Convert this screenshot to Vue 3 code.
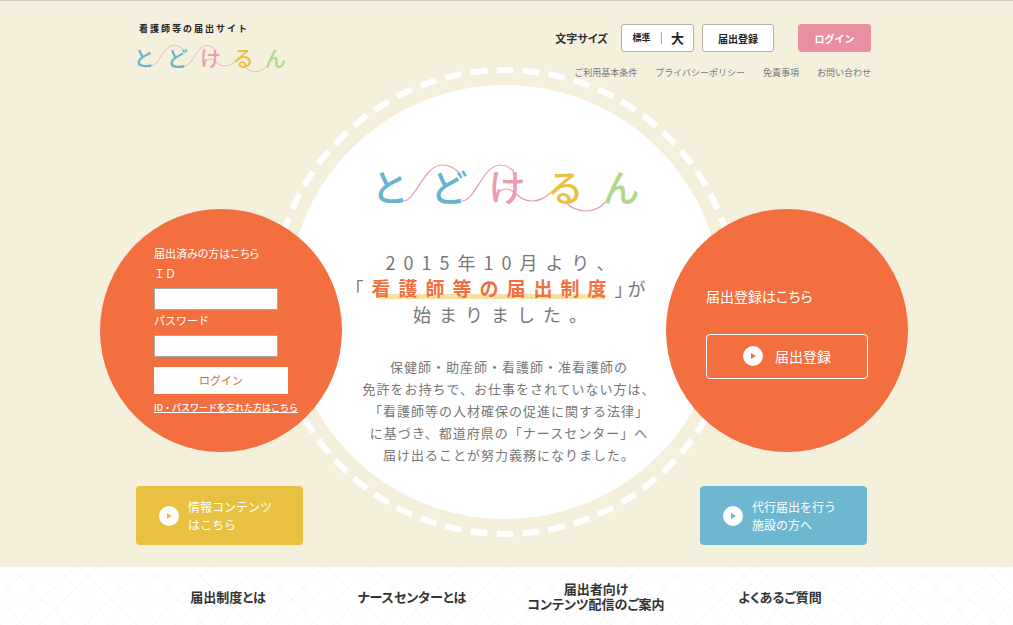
<script setup>
import { h, ref } from 'vue'

const userId = ref('')
const password = ref('')

const logoLetters = [
  { char: 'と', x: 14, fill: '#67b5cd' },
  { char: 'ど', x: 73, fill: '#67b5cd' },
  { char: 'け', x: 131, fill: '#ea9db2' },
  { char: 'る', x: 189, fill: '#e9c144' },
  { char: 'ん', x: 245, fill: '#aed88c' },
]

const logoThreads = [
  'M27 38C40 38 48 2 66 2C75 2 80 6 84 11',
  'M86 38C99 38 107 2 124 2C131 2 135 5 138 9',
  'M119 34C122 28 127 26 131 26C139 26 142 38 156 38C164 38 170 34 174 30',
  'M189 39C195 45 202 48 210 48C218 48 226 44 229 39',
]

const SiteLogo = () =>
  h('svg', { viewBox: '0 0 264 50', overflow: 'visible', role: 'img', 'aria-label': 'とどけるん' }, [
    ...logoThreads.map((d) => h('path', { d, fill: 'none', stroke: '#e99db0', 'stroke-width': 1.2 })),
    ...logoLetters.map((l) =>
      h(
        'text',
        { x: l.x, y: 39, fill: l.fill, 'font-size': 37, 'font-weight': 500, 'text-anchor': 'middle' },
        l.char,
      ),
    ),
  ])

const PlayIcon = () =>
  h('svg', { viewBox: '0 0 20 20', 'aria-hidden': 'true' }, [
    h('path', {
      fill: '#fff',
      'fill-rule': 'evenodd',
      d: 'M10 0a10 10 0 1 0 0 20a10 10 0 0 0 0-20zM8 7l5 3l-5 3z',
    }),
  ])

const policyLinks = ['ご利用基本条件', 'プライバシーポリシー', '免責事項', 'お問い合わせ']

const navItems = [
  ['届出制度とは'],
  ['ナースセンターとは'],
  ['届出者向け', 'コンテンツ配信のご案内'],
  ['よくあるご質問'],
]

const leadLines = [
  '保健師・助産師・看護師・准看護師の',
  '免許をお持ちで、お仕事をされていない方は、',
  '「看護師等の人材確保の促進に関する法律」',
  'に基づき、都道府県の「ナースセンター」へ',
  '届け出ることが努力義務になりました。',
]
</script>

<template>
  <div class="page">
    <div class="hero">
      <div class="container">
        <svg class="ring" viewBox="0 0 470 470" aria-hidden="true">
          <circle cx="235" cy="235" r="217" fill="#fff" />
          <circle
            cx="235"
            cy="235"
            r="232"
            fill="none"
            stroke="#fff"
            stroke-width="6"
            pathLength="560"
            stroke-dasharray="6.4 3.6"
            stroke-dashoffset="3.2"
            transform="rotate(-90 235 235)"
          />
        </svg>

        <header class="header">
          <a class="brand" href="#">
            <span class="brand-caption">看護師等の届出サイト</span>
            <SiteLogo class="brand-logo" />
          </a>
          <div class="tools">
            <div class="tool-row">
              <span class="size-label">文字サイズ</span>
              <div class="size-switch">
                <button type="button" class="size-normal">標準</button>
                <button type="button" class="size-large">大</button>
              </div>
              <button type="button" class="tool register">届出登録</button>
              <button type="button" class="tool login">ログイン</button>
            </div>
            <nav class="policies">
              <a v-for="p in policyLinks" :key="p" href="#">{{ p }}</a>
            </nav>
          </div>
        </header>

        <main class="stage">
          <form class="disc member" @submit.prevent>
            <p class="member-title">届出済みの方はこちら</p>
            <label for="user-id">ＩＤ</label>
            <input id="user-id" v-model="userId" type="text" />
            <label for="user-pass">パスワード</label>
            <input id="user-pass" v-model="password" type="password" />
            <button type="submit">ログイン</button>
            <a href="#">ID・パスワードを忘れた方はこちら</a>
          </form>

          <section class="intro">
            <SiteLogo class="intro-logo" />
            <h1>
              2015年10月より、<br />
              <span class="bracket">「</span><strong>看護師等の届出制度</strong><span class="bracket close">」</span>が<br />
              始まりました。
            </h1>
            <p class="lead">
              <template v-for="line in leadLines" :key="line">{{ line }}<br /></template>
            </p>
          </section>

          <section class="disc entry">
            <p>届出登録はこちら</p>
            <a href="#"><PlayIcon class="play" />届出登録</a>
          </section>

          <a class="cta info" href="#">
            <PlayIcon class="play" />
            <span>情報コンテンツ<br />はこちら</span>
          </a>
          <a class="cta proxy" href="#">
            <PlayIcon class="play" />
            <span>代行届出を行う<br />施設の方へ</span>
          </a>
        </main>
      </div>
    </div>

    <nav class="main-nav">
      <ul>
        <li v-for="item in navItems" :key="item[0]">
          <a href="#"><span v-for="t in item" :key="t">{{ t }}</span></a>
        </li>
      </ul>
    </nav>
  </div>
</template>

<style>
body {
  margin: 0;
  background: #fff;
}
</style>

<style scoped>
.page {
  font-family: "Noto Sans CJK JP", "Noto Sans", sans-serif;
  color: #333;
  overflow-x: hidden;
}

.page a {
  color: inherit;
  text-decoration: none;
}

.page p,
.page h1 {
  margin: 0;
}

.page button {
  font-family: inherit;
  cursor: pointer;
}

.hero {
  background: #f5f0dc;
  border-top: 1px solid #cfc9bb;
  padding: 22px 5px 22px 0;
}

.container {
  position: relative;
  max-width: 808px;
  margin: 0 auto;
}

.ring {
  position: absolute;
  top: 44px;
  left: 50%;
  width: 470px;
  height: 470px;
  margin-left: -234px;
}

.header {
  position: relative;
  display: flex;
  justify-content: space-between;
  padding: 0 37px 0 36px;
  height: 140px;
}

.brand {
  display: flex;
  flex-direction: column;
  align-items: flex-start;
}

.brand-caption {
  padding-left: 3px;
  font-size: 9px;
  line-height: 12px;
  font-weight: 700;
  letter-spacing: 2px;
  color: #222;
}

.brand-logo {
  width: 150px;
  height: 29px;
  margin-top: 9px;
}

.tools {
  display: flex;
  flex-direction: column;
  align-items: flex-end;
}

.tool-row {
  display: flex;
  align-items: center;
  padding-top: 1px;
}

.size-label {
  font-size: 11px;
  font-weight: 700;
  font-feature-settings: "palt";
  margin-right: 13px;
}

.size-switch,
.tool {
  box-sizing: border-box;
  height: 28px;
  border: 1px solid #b3b1aa;
  border-radius: 3px;
  background: #fff;
  font-weight: 700;
  color: #222;
}

.size-switch {
  display: flex;
  align-items: center;
  width: 73px;
  margin-right: 8px;
}

.size-switch button {
  flex: 1;
  padding: 0;
  border: 0;
  background: none;
  font-weight: 700;
  line-height: 12px;
  color: inherit;
}

.size-switch .size-normal {
  flex: 0 0 40px;
  border-right: 1px solid #aaa;
  font-size: 9px;
}

.size-switch .size-large {
  font-size: 13px;
}

.tool {
  padding: 0;
  font-size: 10px;
}

.register {
  width: 72px;
  margin-right: 24px;
}

.page .login {
  width: 73px;
  border-color: #e890a2;
  background: #e890a2;
  color: #fff;
}

.policies {
  display: flex;
  gap: 18px;
  margin-top: 14px;
  font-size: 9px;
  line-height: 13px;
  color: #777;
}

.stage {
  position: relative;
  display: grid;
  grid-template-columns: 242px minmax(0, 1fr) 242px;
  grid-template-rows: auto auto;
  row-gap: 34px;
}

.disc {
  box-sizing: border-box;
  height: 243px;
  margin-top: 46px;
  border-radius: 50%;
  background: #f36f3f;
  color: #fff;
}

.member {
  grid-area: 1 / 1;
  display: flex;
  flex-direction: column;
  align-items: flex-start;
  padding: 35px 0 0 54px;
  font-size: 11px;
}

.member-title {
  font-feature-settings: "palt";
  line-height: 18px;
}

.member label {
  line-height: 22px;
}

.member input {
  box-sizing: border-box;
  width: 124px;
  height: 22px;
  margin: 4px 0 0;
  padding: 0 4px;
  border: 1px solid #a9a9a9;
  background: #fff;
  font-size: 11px;
}

.member input + label {
  line-height: 21px;
}

.member button {
  width: 134px;
  height: 27px;
  margin-top: 10px;
  padding: 0 0 2px;
  border: 0;
  background: #fff;
  font-size: 11px;
  color: #e2643c;
}

.member a {
  margin-top: 7px;
  font-size: 9px;
  line-height: 14px;
  font-weight: 500;
  white-space: nowrap;
  text-decoration: underline;
}

.entry {
  grid-area: 1 / 3;
  padding: 77px 40px 0;
  font-size: 14px;
  line-height: 20px;
}

.entry p {
  font-feature-settings: "palt";
}

.entry a {
  box-sizing: border-box;
  display: flex;
  align-items: center;
  justify-content: center;
  gap: 12px;
  height: 45px;
  margin-top: 28px;
  padding-bottom: 1px;
  border: 1px solid #fff;
  border-radius: 4px;
}

.play {
  flex: none;
  width: 20px;
  height: 20px;
}

.intro {
  grid-area: 1 / 2 / 3 / 3;
  display: flex;
  flex-direction: column;
  align-items: center;
  text-align: center;
  white-space: nowrap;
}

.intro-logo {
  width: 264px;
  height: 50px;
  margin-left: 8px;
}

.intro h1 {
  margin-top: 36px;
  font-size: 18px;
  line-height: 26px;
  font-weight: 400;
  letter-spacing: 8px;
  color: #777;
}

.intro strong {
  font-size: 19px;
  line-height: 20px;
  color: #f36f3f;
  background: linear-gradient(#f6e1a4, #f6e1a4) 8px 20px / 226px 5px no-repeat;
}

.bracket {
  font-feature-settings: "halt";
}

.close {
  letter-spacing: 4px;
}

.lead {
  font-size: 13px;
  line-height: 22px;
  letter-spacing: 1px;
  color: #777;
}

.intro .lead {
  margin-top: 29px;
  padding-left: 10px;
}

.cta {
  box-sizing: border-box;
  display: flex;
  align-items: center;
  gap: 9px;
  width: 167px;
  height: 59px;
  padding-left: 23px;
  border-radius: 4px;
  font-size: 12px;
  line-height: 18px;
}

.page .cta,
.page .disc a {
  color: #fff;
}

.info {
  grid-area: 2 / 1;
  margin-left: 36px;
  background: #e8c140;
}

.proxy {
  grid-area: 2 / 3;
  margin-left: 34px;
  background: #6db8d0;
}

.main-nav {
  padding: 0 5px 0 0;
  background:
    repeating-linear-gradient(45deg, #f9f9fc 0 1px, transparent 1px 16px),
    repeating-linear-gradient(-45deg, #f9f9fc 0 1px, transparent 1px 16px),
    #fff;
}

.main-nav ul {
  display: grid;
  grid-template-columns: repeat(4, 1fr);
  align-items: center;
  max-width: 736px;
  min-height: 58px;
  margin: 0 auto;
  padding: 0;
  list-style: none;
}

.main-nav a {
  display: flex;
  flex-direction: column;
  align-items: center;
  font-size: 13px;
  line-height: 15px;
  font-weight: 700;
  font-feature-settings: "palt";
  white-space: nowrap;
  color: #333;
}
</style>
